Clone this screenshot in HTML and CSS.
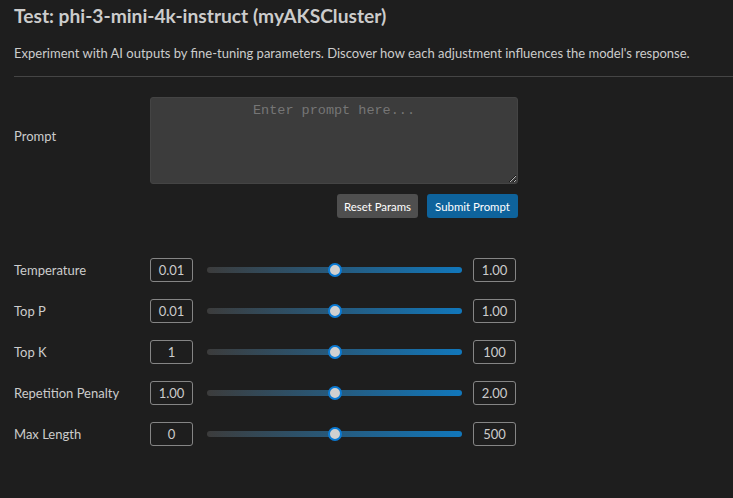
FILE: index.html
```html
<!DOCTYPE html>
<html lang="en">
<head>
<meta charset="utf-8">
<title>Test: phi-3-mini-4k-instruct</title>
<link rel="stylesheet" href="styles.css">
</head>
<body>
<div class="page">
  <h1 class="title">Test: phi-3-mini-4k-instruct (myAKSCluster)</h1>
  <p class="desc">Experiment with AI outputs by fine-tuning parameters. Discover how each adjustment influences the model's response.</p>
  <hr class="rule">
  <div class="prompt-row">
    <label class="label" for="prompt">Prompt</label>
    <div class="prompt-col">
      <textarea id="prompt" class="prompt" placeholder="Enter prompt here..."></textarea>
      <div class="actions">
        <button class="btn btn-secondary">Reset Params</button>
        <button class="btn btn-primary">Submit Prompt</button>
      </div>
    </div>
  </div>
  <div class="params">
    <div class="param">
      <span class="label">Temperature</span>
      <input class="num" type="text" value="0.01">
      <input class="range" type="range" min="0" max="100" value="50">
      <input class="num" type="text" value="1.00">
    </div>
    <div class="param">
      <span class="label">Top P</span>
      <input class="num" type="text" value="0.01">
      <input class="range" type="range" min="0" max="100" value="50">
      <input class="num" type="text" value="1.00">
    </div>
    <div class="param">
      <span class="label">Top K</span>
      <input class="num" type="text" value="1">
      <input class="range" type="range" min="0" max="100" value="50">
      <input class="num" type="text" value="100">
    </div>
    <div class="param">
      <span class="label">Repetition Penalty</span>
      <input class="num" type="text" value="1.00">
      <input class="range" type="range" min="0" max="100" value="50">
      <input class="num" type="text" value="2.00">
    </div>
    <div class="param">
      <span class="label">Max Length</span>
      <input class="num" type="text" value="0">
      <input class="range" type="range" min="0" max="100" value="50">
      <input class="num" type="text" value="500">
    </div>
  </div>
</div>
</body>
</html>
```
FILE: styles.css
```css
html, body {
  margin: 0;
  padding: 0;
  background: #1e1e1e;
  color: #cccccc;
  font-family: "Lato", "Noto Sans", sans-serif;
  font-size: 13px;
}
.page {
  padding: 0 0 0 14px;
}
.title {
  margin: 0;
  padding-top: 2px;
  font-size: 19.2px;
  font-weight: 700;
  line-height: 27px;
  color: #cccccc;
}
.desc {
  margin: 15px 0 0;
  line-height: 18px;
  white-space: nowrap;
}
.rule {
  margin: 14px 0 0;
  border: 0;
  border-top: 1px solid #454545;
  height: 0;
}
.prompt-row {
  display: flex;
  align-items: flex-start;
  margin-top: 20px;
}
.prompt-row .label {
  width: 136px;
  padding-top: 30px;
}
.label {
  line-height: 18px;
  flex: none;
}
.prompt-col {
  width: 368px;
  display: flex;
  flex-direction: column;
}
.prompt {
  box-sizing: border-box;
  width: 368px;
  height: 87px;
  margin: 0;
  background: #3c3c3c;
  border: 1px solid #444444;
  border-radius: 3px;
  color: #cccccc;
  font-family: "Liberation Mono", monospace;
  font-size: 13.5px;
  text-align: center;
  padding: 5px 6px;
  resize: vertical;
}
.prompt::placeholder {
  color: #767676;
}
.actions {
  display: flex;
  justify-content: flex-end;
  gap: 9px;
  margin-top: 10px;
}
.btn {
  height: 24px;
  border: 0;
  border-radius: 3px;
  color: #ffffff;
  font-family: inherit;
  font-size: 11.4px;
  padding: 0;
  white-space: nowrap;
}
.btn-secondary {
  background: #4f4f4f;
  width: 81px;
}
.btn-primary {
  background: #0e639c;
  width: 91px;
}
.params {
  margin-top: 40px;
  display: flex;
  flex-direction: column;
  gap: 17px;
}
.param {
  display: flex;
  align-items: center;
  height: 24px;
}
.param .label {
  width: 136px;
}
.num {
  box-sizing: border-box;
  width: 43px;
  height: 24px;
  margin: 0;
  background: transparent;
  border: 1px solid #858585;
  border-radius: 3px;
  color: #cccccc;
  font-family: inherit;
  font-size: 13px;
  text-align: center;
  padding: 0;
}
.range {
  -webkit-appearance: none;
  appearance: none;
  width: 255px;
  height: 14px;
  margin: 0 11px 0 14px;
  background: transparent;
}
.range::-webkit-slider-runnable-track {
  height: 6px;
  border-radius: 3px;
  background: linear-gradient(to right, #3c3c3c, #1177bb);
}
.range::-webkit-slider-thumb {
  -webkit-appearance: none;
  appearance: none;
  box-sizing: border-box;
  width: 14px;
  height: 14px;
  margin-top: -4px;
  border-radius: 50%;
  background: #d0d0d0;
  border: 2px solid #0a7ad4;
}
```
